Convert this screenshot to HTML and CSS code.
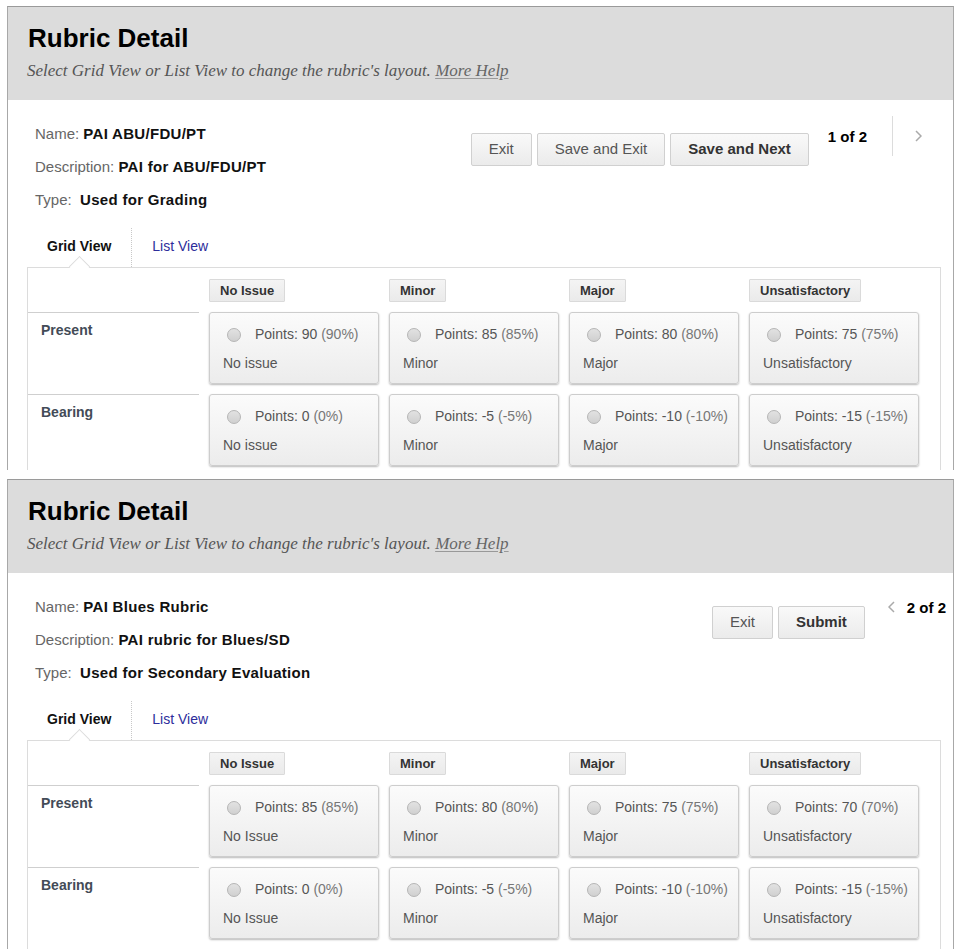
FILE: index.html
```html
<!DOCTYPE html>
<html lang="en">
<head>
<meta charset="utf-8">
<title>Rubric Detail</title>
<link rel="stylesheet" href="styles.css">
</head>
<body>

<section class="shot">
  <div class="panel">
    <div class="head">
      <h1 class="title">Rubric Detail</h1>
      <p class="subtitle">Select Grid View or List View to change the rubric's layout. <a href="#">More Help</a></p>
    </div>
    <div class="top">
      <div class="info">
        <div><span class="lbl">Name:</span> <b>PAI ABU/FDU/PT</b></div>
        <div><span class="lbl">Description:</span> <b>PAI for ABU/FDU/PT</b></div>
        <div><span class="lbl">Type:</span>&nbsp;&nbsp;<b>Used for Grading</b></div>
      </div>
      <div class="actions">
        <button class="btn">Exit</button>
        <button class="btn">Save and Exit</button>
        <button class="btn btn-strong">Save and Next</button>
      </div>
      <div class="pager pager-first">
        <span class="count">1 of 2</span>
        <span class="sep"></span>
        <svg class="chev" width="7" height="12" viewBox="0 0 7 12"><polyline points="1,1 6,6 1,11" fill="none" stroke="#aaa" stroke-width="1.5"/></svg>
      </div>
    </div>
    <div class="rubric">
      <div class="tabs">
        <span class="tab tab-active">Grid View</span>
        <a class="tab tab-link" href="#">List View</a>
      </div>
      <div class="grid">
        <div class="corner"></div>
        <div class="colhead"><span>No Issue</span></div>
        <div class="colhead"><span>Minor</span></div>
        <div class="colhead"><span>Major</span></div>
        <div class="colhead"><span>Unsatisfactory</span></div>

        <div class="rowlabel">Present</div>
        <div class="cell"><div class="pts"><span class="radio"></span>Points: 90&nbsp;<span class="pct">(90%)</span></div><div class="desc">No issue</div></div>
        <div class="cell"><div class="pts"><span class="radio"></span>Points: 85&nbsp;<span class="pct">(85%)</span></div><div class="desc">Minor</div></div>
        <div class="cell"><div class="pts"><span class="radio"></span>Points: 80&nbsp;<span class="pct">(80%)</span></div><div class="desc">Major</div></div>
        <div class="cell"><div class="pts"><span class="radio"></span>Points: 75&nbsp;<span class="pct">(75%)</span></div><div class="desc">Unsatisfactory</div></div>

        <div class="rowlabel">Bearing</div>
        <div class="cell"><div class="pts"><span class="radio"></span>Points: 0&nbsp;<span class="pct">(0%)</span></div><div class="desc">No issue</div></div>
        <div class="cell"><div class="pts"><span class="radio"></span>Points: -5&nbsp;<span class="pct">(-5%)</span></div><div class="desc">Minor</div></div>
        <div class="cell"><div class="pts"><span class="radio"></span>Points: -10&nbsp;<span class="pct">(-10%)</span></div><div class="desc">Major</div></div>
        <div class="cell"><div class="pts"><span class="radio"></span>Points: -15&nbsp;<span class="pct">(-15%)</span></div><div class="desc">Unsatisfactory</div></div>
      </div>
    </div>
  </div>
</section>

<section class="shot shot-second">
  <div class="panel">
    <div class="head">
      <h1 class="title">Rubric Detail</h1>
      <p class="subtitle">Select Grid View or List View to change the rubric's layout. <a href="#">More Help</a></p>
    </div>
    <div class="top">
      <div class="info">
        <div><span class="lbl">Name:</span> <b>PAI Blues Rubric</b></div>
        <div><span class="lbl">Description:</span> <b>PAI rubric for Blues/SD</b></div>
        <div><span class="lbl">Type:</span>&nbsp;&nbsp;<b>Used for Secondary Evaluation</b></div>
      </div>
      <div class="actions">
        <button class="btn">Exit</button>
        <button class="btn btn-strong">Submit</button>
      </div>
      <div class="pager pager-last">
        <svg class="chev" width="7" height="12" viewBox="0 0 7 12"><polyline points="6,1 1,6 6,11" fill="none" stroke="#aaa" stroke-width="1.5"/></svg>
        <span class="count">2 of 2</span>
      </div>
    </div>
    <div class="rubric">
      <div class="tabs">
        <span class="tab tab-active">Grid View</span>
        <a class="tab tab-link" href="#">List View</a>
      </div>
      <div class="grid">
        <div class="corner"></div>
        <div class="colhead"><span>No Issue</span></div>
        <div class="colhead"><span>Minor</span></div>
        <div class="colhead"><span>Major</span></div>
        <div class="colhead"><span>Unsatisfactory</span></div>

        <div class="rowlabel">Present</div>
        <div class="cell"><div class="pts"><span class="radio"></span>Points: 85&nbsp;<span class="pct">(85%)</span></div><div class="desc">No Issue</div></div>
        <div class="cell"><div class="pts"><span class="radio"></span>Points: 80&nbsp;<span class="pct">(80%)</span></div><div class="desc">Minor</div></div>
        <div class="cell"><div class="pts"><span class="radio"></span>Points: 75&nbsp;<span class="pct">(75%)</span></div><div class="desc">Major</div></div>
        <div class="cell"><div class="pts"><span class="radio"></span>Points: 70&nbsp;<span class="pct">(70%)</span></div><div class="desc">Unsatisfactory</div></div>

        <div class="rowlabel">Bearing</div>
        <div class="cell"><div class="pts"><span class="radio"></span>Points: 0&nbsp;<span class="pct">(0%)</span></div><div class="desc">No Issue</div></div>
        <div class="cell"><div class="pts"><span class="radio"></span>Points: -5&nbsp;<span class="pct">(-5%)</span></div><div class="desc">Minor</div></div>
        <div class="cell"><div class="pts"><span class="radio"></span>Points: -10&nbsp;<span class="pct">(-10%)</span></div><div class="desc">Major</div></div>
        <div class="cell"><div class="pts"><span class="radio"></span>Points: -15&nbsp;<span class="pct">(-15%)</span></div><div class="desc">Unsatisfactory</div></div>
      </div>
    </div>
  </div>
</section>

</body>
</html>
```
FILE: styles.css
```css
* { box-sizing: border-box; }

body {
  margin: 0;
  background: #fff;
  font-family: "Liberation Sans", Arial, sans-serif;
  color: #333;
}

.shot {
  height: 470px;
  overflow: hidden;
  padding-top: 6px;
}

.shot-second {
  height: 479px;
  padding-top: 9px;
}

.panel {
  margin: 0 2px 0 7px;
  border-top: 1px solid #9a9a9a;
  border-left: 1px solid #a8a8a8;
  border-right: 1px solid #a8a8a8;
  min-height: 700px;
}

.head {
  background: #dcdcdc;
  height: 93px;
  padding: 16px 0 0 20px;
}

.title {
  margin: 0;
  font-size: 26px;
  line-height: 30px;
  font-weight: bold;
  color: #000;
}

.subtitle {
  margin: 8px 0 0 -1px;
  font-family: "Liberation Serif", "Times New Roman", serif;
  font-style: italic;
  font-size: 17px;
  line-height: 20px;
  color: #555;
}

.subtitle a {
  color: #666;
  text-decoration: underline;
  text-decoration-color: #999;
  text-underline-offset: 2px;
}

.top {
  display: flex;
  align-items: flex-start;
  padding: 17px 0 0 27px;
}

.info {
  flex: 1;
  font-size: 15px;
  line-height: 33px;
}

.info .lbl { color: #666; }
.info b { color: #111; letter-spacing: 0.3px; }

.actions {
  display: flex;
  gap: 5px;
  margin-top: 16px;
}

.btn {
  height: 33px;
  padding: 0 17px 2px;
  border: 1px solid #d0d0d0;
  border-radius: 2px;
  background: linear-gradient(#f9f9f9, #ebebeb);
  font: 15px "Liberation Sans", Arial, sans-serif;
  color: #555;
}

.btn-strong {
  font-weight: bold;
  color: #333;
}

.pager {
  display: flex;
  align-items: center;
  height: 40px;
  font-size: 15px;
  font-weight: bold;
  color: #000;
}

.pager-first {
  margin: -1px 31px 0 19px;
}

.pager-first .sep {
  width: 1px;
  height: 40px;
  background: #dcdcdc;
  margin: 0 22px 0 25px;
}

.pager-last {
  margin: -3px 7px 0 23px;
}

.pager-last .chev { margin-right: 12px; }

.rubric {
  margin: 12px 12px 0 19px;
}

.tabs {
  display: flex;
  height: 39px;
}

.tab {
  position: relative;
  display: flex;
  align-items: center;
  height: 39px;
  padding: 0 20px 3px;
  font-size: 14px;
}

.tab-active {
  font-weight: bold;
  color: #111;
  border-right: 1px dotted #c8c8c8;
}

.tab-active::after {
  content: "";
  position: absolute;
  left: calc(50% - 7px);
  bottom: -7px;
  width: 14px;
  height: 14px;
  background: #fff;
  border-left: 1px solid #dcdcdc;
  border-top: 1px solid #dcdcdc;
  transform: rotate(45deg);
  z-index: 1;
}

.tab-link {
  color: #2d2d9b;
  text-decoration: none;
}

.grid {
  border: 1px solid #dcdcdc;
  display: grid;
  grid-template-columns: 171px repeat(4, 170px);
  grid-auto-rows: 72px;
  grid-template-rows: 23px;
  column-gap: 10px;
  row-gap: 10px;
  padding: 11px 0 40px 0;
}

.colhead span {
  display: inline-block;
  height: 23px;
  padding: 0 10px;
  border: 1px solid #dadada;
  border-radius: 1px;
  background: linear-gradient(#f4f4f4, #eaeaea);
  font-size: 13px;
  font-weight: bold;
  line-height: 21px;
  color: #333;
}

.rowlabel {
  border-top: 1px solid #cfcfcf;
  padding: 8px 0 0 13px;
  font-size: 14px;
  font-weight: bold;
  line-height: 18px;
  color: #434b57;
}

.cell {
  border: 1px solid #cdcdcd;
  border-radius: 3px;
  background: linear-gradient(#fbfbfb, #ececec);
  box-shadow: 0 1px 2px rgba(0, 0, 0, 0.28);
  padding: 11px 0 0 13px;
  font-size: 14px;
  color: #555;
}

.pts {
  display: flex;
  align-items: center;
  height: 20px;
}

.radio {
  width: 14px;
  height: 14px;
  margin: 2px 14px 0 4px;
  border: 1px solid #b5b5b5;
  border-radius: 50%;
  background: linear-gradient(#e2e2e2, #d0d0d0);
}

.pct {
  color: #777;
}

.desc {
  margin-top: 9px;
  line-height: 20px;
}
```
